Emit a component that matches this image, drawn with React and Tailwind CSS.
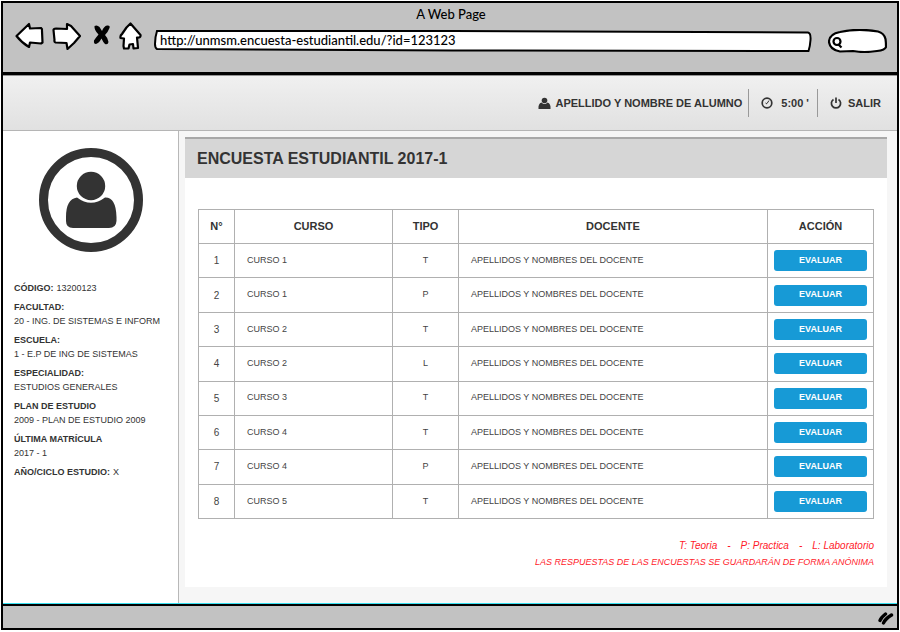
import React from "react";

const courses = [
  { n: 1, name: "CURSO 1", type: "T" },
  { n: 2, name: "CURSO 1", type: "P" },
  { n: 3, name: "CURSO 2", type: "T" },
  { n: 4, name: "CURSO 2", type: "L" },
  { n: 5, name: "CURSO 3", type: "T" },
  { n: 6, name: "CURSO 4", type: "T" },
  { n: 7, name: "CURSO 4", type: "P" },
  { n: 8, name: "CURSO 5", type: "T" },
];

const details = [
  { label: "CÓDIGO:", value: "13200123", inline: true },
  { label: "FACULTAD:", value: "20 - ING. DE SISTEMAS E INFORM" },
  { label: "ESCUELA:", value: "1 - E.P DE ING DE SISTEMAS" },
  { label: "ESPECIALIDAD:", value: "ESTUDIOS GENERALES" },
  { label: "PLAN DE ESTUDIO", value: "2009 - PLAN DE ESTUDIO 2009" },
  { label: "ÚLTIMA MATRÍCULA", value: "2017 - 1" },
  { label: "AÑO/CICLO ESTUDIO:", value: "X", inline: true },
];

function NavIcons() {
  return (
    <nav aria-label="Navegador" className="flex shrink-0 items-center">
      <button type="button" aria-label="Atrás" className="mr-2">
        <svg width="29" height="28" viewBox="0 0 29 28" fill="white" stroke="black" strokeWidth="2.2" strokeLinejoin="round">
          <path d="M1.500 14 L14 2 L15 6.500 L26 6 Q27.500 7 27 9 L27.500 20.500 L26 21.500 L15 20.500 L14 25 Q7 21 1.500 14Z" />
        </svg>
      </button>
      <button type="button" aria-label="Adelante" className="mr-3">
        <svg width="29" height="28" viewBox="0 0 29 28" fill="white" stroke="black" strokeWidth="2.2" strokeLinejoin="round">
          <path d="M2.500 18 L1.500 8 Q1.500 6.500 4 6.500 L15 7 L15 2 L19 4 L28 14 L22 21 L15.500 27 L14.500 21 L3.500 20.500 Q2 20 2.500 18Z" />
        </svg>
      </button>
      <button type="button" aria-label="Detener" className="mr-2">
        <svg width="18" height="28" viewBox="0 0 18 28" fill="black">
          <path d="M1.500 4 Q4 2.500 6.500 5 L9 9 Q11 4 14 3.500 Q17.500 3 16.500 6 Q15 10 12 13 Q15 16 15.500 20 Q15 23 12 22 Q10 20 8.500 16.500 Q6 21 3 22 Q0.500 22 1 18.500 Q3 15.500 5.500 12.500 Q1 8 1.500 4Z" />
        </svg>
      </button>
      <button type="button" aria-label="Inicio">
        <svg width="23" height="28" viewBox="0 0 23 28" fill="white" stroke="black" strokeWidth="2.200" strokeLinejoin="round">
          <path d="M11.500 1.500 L21.500 13 Q22 16 18 15.500 L19 26 L14.500 26.500 L14 22 L10.500 22.500 L9.500 26.500 L5 26.500 L4.500 24 L5 16.500 L1.500 16 Q1 13.500 3 12 L7.500 5.500Z" />
        </svg>
      </button>
    </nav>
  );
}

function BrowserBar() {
  return (
    <header className="h-[69px] bg-[#c2c2c2] pt-[3px] pr-2.5 pl-3 font-['Lato',sans-serif] text-black">
      <div className="text-center text-[13px] leading-4 font-medium">A Web Page</div>
      <div className="flex items-start">
        <NavIcons />
        <div className="relative mt-2 ml-3 h-[22px] flex-1">
          <svg className="absolute inset-0 h-full w-full" viewBox="0 0 659 22" preserveAspectRatio="none" fill="white" stroke="black" strokeWidth="2">
            <path d="M3 1 L300 1 L655 2.500 Q658 3 657.500 10 Q657 17 655.500 21 L300 20.500 L3 19 Q1 18 1 14 Q1 7 3 1Z" />
          </svg>
          <input
            aria-label="Dirección"
            defaultValue="http://unmsm.encuesta-estudiantil.edu/?id=123123"
            className="relative block h-5 w-full bg-transparent px-1.5 text-[13px] font-medium outline-none"
          />
        </div>
        <div className="relative mt-[7px] ml-4 h-6 w-[59px]">
          <svg className="absolute inset-0" width="59" height="24" viewBox="0 0 59 24" fill="white" stroke="black" strokeWidth="2.200">
            <path d="M12 22.500 Q2 21 1 13 Q1 5 12 3 Q30 -1 50 2.500 Q56 4 57.500 10 Q58 13 58 18 Q57 21 49 22 Q36 24 25 22Z" />
            <circle cx="9" cy="12.500" r="3.500" />
            <path d="M10.500 15.500 L13.500 18.500" />
          </svg>
          <input aria-label="Buscar" className="relative block h-full w-full bg-transparent pr-2 pl-5 text-xs outline-none" />
        </div>
      </div>
    </header>
  );
}

function UserBar() {
  return (
    <div className="flex h-14 items-center justify-end border-t border-b border-t-[#949494] border-b-[#b5b5b5] bg-linear-to-b from-[#f0f0f0] to-[#e1e1e1] pr-4 text-[11px] font-bold text-[#333]">
      <svg width="13" height="13" viewBox="0 0 13 13" fill="#333" className="mr-1">
        <circle cx="6.500" cy="3.500" r="2.800" />
        <path d="M3.500 5.500 Q6.500 8.500 9.500 5.500 Q13 6.500 12.500 12 L0.500 12 Q0 6.500 3.500 5.500Z" />
      </svg>
      <span>APELLIDO Y NOMBRE DE ALUMNO</span>
      <span className="ml-1.5 h-7 w-px bg-[#999]" />
      <svg width="12" height="12" viewBox="0 0 12 12" fill="none" stroke="#333" strokeWidth="1.700" className="ml-3">
        <circle cx="6" cy="6" r="4.800" />
        <path d="M6 6.500 L8 3.500 M4.500 6 L6 7" strokeWidth="1" />
      </svg>
      <span className="ml-2">5:00 '</span>
      <span className="ml-2 h-7 w-px bg-[#999]" />
      <button type="button" className="ml-3 flex items-center gap-1.5">
        <svg width="12" height="12" viewBox="0 0 12 12" fill="none" stroke="#333" strokeWidth="1.700">
          <path d="M3.500 2.500 A4.600 4.600 0 1 0 8.500 2.500 M6 0.500 V6" />
        </svg>
        SALIR
      </button>
    </div>
  );
}

function Sidebar() {
  return (
    <aside className="w-44 shrink-0 border-r border-[#b8b8b8] bg-white pt-4">
      <svg width="106" height="106" viewBox="0 0 106 106" className="mx-auto" fill="#333">
        <circle cx="53" cy="53" r="47.500" fill="none" stroke="#333" strokeWidth="9" />
        <circle cx="53" cy="39" r="14.200" />
        <path d="M39 50.500 Q53 61 67 50.500 Q78 50 78.500 70 V74 Q78 81 71 81 H35 Q28 81 28 74 V70 Q28 52 39 50.500Z" />
      </svg>
      <dl className="flex flex-col gap-[5px] pt-7 pl-[11px] text-[9px] leading-[14px] whitespace-nowrap text-[#333]">
        {details.map((d) => (
          <div key={d.label} className={d.inline ? "flex gap-[3px]" : ""}>
            <dt className="font-bold">{d.label}</dt>
            <dd>{d.value}</dd>
          </div>
        ))}
      </dl>
    </aside>
  );
}

function CourseTable() {
  return (
    <table className="h-[310px] w-full table-fixed border-collapse border border-[#a9a9a9] text-[9px] text-[#444]">
      <colgroup>
        <col className="w-9" />
        <col className="w-[158px]" />
        <col className="w-[66px]" />
        <col />
        <col className="w-[106px]" />
      </colgroup>
      <thead className="text-[11px] text-[#333]">
        <tr className="h-[34px]">
          {["N°", "CURSO", "TIPO", "DOCENTE", "ACCIÓN"].map((h) => (
            <th key={h} scope="col" className="border border-[#b0b0b0] p-0">{h}</th>
          ))}
        </tr>
      </thead>
      <tbody>
        {courses.map((c) => (
          <tr key={c.n} className="h-[34px]">
            <td className="border border-[#b0b0b0] p-0 text-center text-[10px]">{c.n}</td>
            <td className="border border-[#b0b0b0] py-0 pr-0 pl-3">{c.name}</td>
            <td className="border border-[#b0b0b0] p-0 text-center">{c.type}</td>
            <td className="border border-[#b0b0b0] py-0 pr-0 pl-3">APELLIDOS Y NOMBRES DEL DOCENTE</td>
            <td className="border border-[#b0b0b0] px-1.5 py-0">
              <button type="button" className="block h-[21px] w-full rounded-[3px] bg-[#179ad6] text-[9px] font-bold text-white">
                EVALUAR
              </button>
            </td>
          </tr>
        ))}
      </tbody>
    </table>
  );
}

export default function App() {
  return (
    <div className="min-h-screen bg-white px-px pt-px pb-0.5 font-['Liberation_Sans',Arial,sans-serif]">
      <div className="flex min-h-[calc(100vh-3px)] flex-col border-2 border-black">
        <BrowserBar />
        <div className="border-t-[3px] border-black">
          <UserBar />
        </div>
        <div className="flex flex-1 border-b border-[#35e0f0] bg-[#f6f6f6]">
          <Sidebar />
          <main className="min-w-0 flex-1 pt-1.5 pr-2.5 pb-4 pl-1.5">
            <section className="h-full bg-white">
              <h1 className="flex h-[41px] items-center border-t-2 border-[#a8a8a8] bg-[#d6d6d6] pl-3 text-base font-bold text-[#333]">
                ENCUESTA ESTUDIANTIL 2017-1
              </h1>
              <div className="px-[13px] pt-[31px]">
                <CourseTable />
                <div className="pt-[18px] text-right text-[10px] leading-[17px] text-[#ff1a2a] italic">
                  <p className="flex justify-end gap-2.5">
                    <span>T: Teoria</span>
                    <span>-</span>
                    <span>P: Practica</span>
                    <span>-</span>
                    <span>L: Laboratorio</span>
                  </p>
                  <p className="text-[9px]">LAS RESPUESTAS DE LAS ENCUESTAS SE GUARDARÁN DE FORMA ANÓNIMA</p>
                </div>
              </div>
            </section>
          </main>
        </div>
        <footer className="flex h-6 items-center justify-end border-t-2 border-black bg-[#c2c2c2] pr-0.5">
          <svg width="18" height="16" viewBox="0 0 18 16" fill="none" stroke="black" strokeWidth="3.400" strokeLinecap="round">
            <path d="M3 11.500 Q4 8.500 8.500 5 M6.500 14 Q8 10 14.500 6" />
          </svg>
        </footer>
      </div>
    </div>
  );
}
